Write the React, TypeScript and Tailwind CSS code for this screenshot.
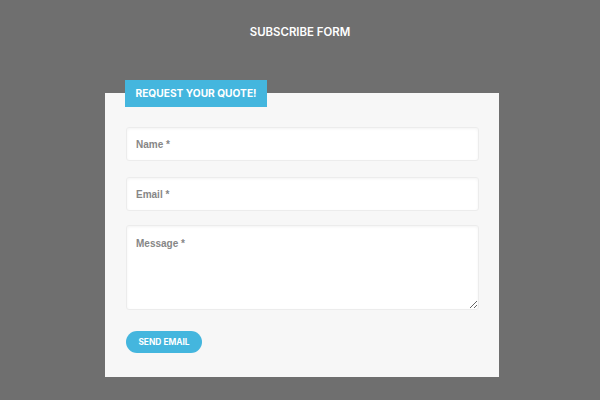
import React from "react";

export default function App() {
  const field =
    "block w-full rounded-[3px] border border-[#ececec] bg-white px-[9px] text-[10px] font-bold text-[#555] " +
    "placeholder:text-[#868686] shadow-[inset_0_1px_3px_rgba(0,0,0,0.05)] focus:outline-none";

  return (
    <div className="h-[400px] w-[600px] overflow-hidden bg-[#6f6f6f] font-['Liberation_Sans',Arial,sans-serif]">
      <h1 className="pt-[24px] text-center font-['Inter',sans-serif] text-[11.4px] font-semibold leading-[16px] text-white">
        SUBSCRIBE FORM
      </h1>

      <div className="relative ml-[105px] mt-[53px] w-[394px] bg-[#f7f7f7] px-[20px] pt-[34px] pb-[24px] pl-[21px]">
        <div className="absolute left-[20px] top-[-13px] flex h-[27px] w-[142px] items-center justify-center bg-[#44b6de] font-['Inter',sans-serif] text-[10.2px] font-bold text-white">
          REQUEST YOUR QUOTE!
        </div>

        <form className="flex flex-col" onSubmit={(e) => e.preventDefault()}>
          <input className={`${field} h-[34px]`} placeholder="Name *" />
          <input className={`${field} mt-[16px] h-[34px]`} placeholder="Email *" />
          <textarea
            className={`${field} mt-[14px] h-[85px] pt-[11px] leading-[14px]`}
            placeholder="Message *"
          />
          <button className="mt-[21px] h-[22px] w-[76px] rounded-full bg-[#44b6de] font-['Inter',sans-serif] text-[8.4px] font-bold text-white">
            SEND EMAIL
          </button>
        </form>
      </div>
    </div>
  );
}
